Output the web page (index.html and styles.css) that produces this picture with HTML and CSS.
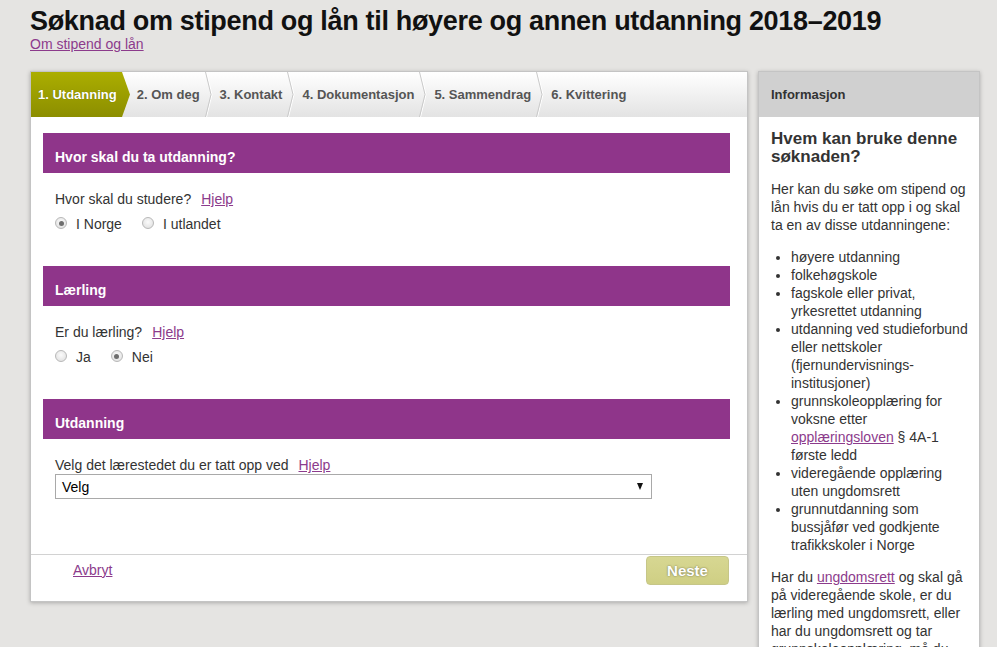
FILE: index.html
```html
<!DOCTYPE html>
<html lang="no">
<head>
<meta charset="utf-8">
<title>Søknad om stipend og lån</title>
<link rel="stylesheet" href="styles.css">
</head>
<body>
<div class="page">
  <h1 class="title">Søknad om stipend og lån til høyere og annen utdanning 2018–2019</h1>
  <a class="sublink" href="#">Om stipend og lån</a>

  <div class="layout">
    <main class="main">
      <nav class="steps">
        <div class="step active">
          <span class="step-label">1. Utdanning</span>
          <svg class="step-tip" width="8" height="45" viewBox="0 0 8 45">
            <defs>
              <linearGradient id="olive" x1="0" y1="0" x2="0" y2="1">
                <stop offset="0" stop-color="#abae00"/>
                <stop offset="1" stop-color="#8c8e00"/>
              </linearGradient>
            </defs>
            <polygon points="0,0 8,22.5 0,45" fill="url(#olive)"/>
          </svg>
        </div>
        <div class="step">
          <span class="step-label">2. Om deg</span>
          <svg class="sep" width="8" height="45" viewBox="0 0 8 45"><polyline points="1.5,0 7,22.5 1.5,45" fill="none" stroke="#fff" stroke-width="1"/><polyline points="0.5,0 6,22.5 0.5,45" fill="none" stroke="#c9c9c9" stroke-width="1"/></svg>
        </div>
        <div class="step">
          <span class="step-label">3. Kontakt</span>
          <svg class="sep" width="8" height="45" viewBox="0 0 8 45"><polyline points="1.5,0 7,22.5 1.5,45" fill="none" stroke="#fff" stroke-width="1"/><polyline points="0.5,0 6,22.5 0.5,45" fill="none" stroke="#c9c9c9" stroke-width="1"/></svg>
        </div>
        <div class="step">
          <span class="step-label">4. Dokumentasjon</span>
          <svg class="sep" width="8" height="45" viewBox="0 0 8 45"><polyline points="1.5,0 7,22.5 1.5,45" fill="none" stroke="#fff" stroke-width="1"/><polyline points="0.5,0 6,22.5 0.5,45" fill="none" stroke="#c9c9c9" stroke-width="1"/></svg>
        </div>
        <div class="step">
          <span class="step-label">5. Sammendrag</span>
          <svg class="sep" width="8" height="45" viewBox="0 0 8 45"><polyline points="1.5,0 7,22.5 1.5,45" fill="none" stroke="#fff" stroke-width="1"/><polyline points="0.5,0 6,22.5 0.5,45" fill="none" stroke="#c9c9c9" stroke-width="1"/></svg>
        </div>
        <div class="step">
          <span class="step-label">6. Kvittering</span>
        </div>
      </nav>

      <div class="form">
        <section class="section">
          <h2 class="section-head">Hvor skal du ta utdanning?</h2>
          <div class="section-body">
            <div class="question">Hvor skal du studere?<a class="help" href="#">Hjelp</a></div>
            <div class="radios">
              <span class="radio-item"><span class="radio checked"></span>I Norge</span>
              <span class="radio-item"><span class="radio"></span>I utlandet</span>
            </div>
          </div>
        </section>

        <section class="section">
          <h2 class="section-head">Lærling</h2>
          <div class="section-body">
            <div class="question">Er du lærling?<a class="help" href="#">Hjelp</a></div>
            <div class="radios">
              <span class="radio-item"><span class="radio"></span>Ja</span>
              <span class="radio-item"><span class="radio checked"></span>Nei</span>
            </div>
          </div>
        </section>

        <section class="section">
          <h2 class="section-head">Utdanning</h2>
          <div class="section-body">
            <div class="question">Velg det lærestedet du er tatt opp ved<a class="help" href="#">Hjelp</a></div>
            <div class="select"><span>Velg</span><span class="select-arrow"></span></div>
          </div>
        </section>
      </div>

      <div class="footer">
        <a class="cancel" href="#">Avbryt</a>
        <button class="next" type="button">Neste</button>
      </div>
    </main>

    <aside class="sidebar">
      <div class="side-head">Informasjon</div>
      <div class="side-body">
        <h2 class="side-title">Hvem kan bruke denne søknaden?</h2>
        <p>Her kan du søke om stipend og lån hvis du er tatt opp i og skal ta en av disse utdanningene:</p>
        <ul>
          <li>høyere utdanning</li>
          <li>folkehøgskole</li>
          <li>fagskole eller privat, yrkesrettet utdanning</li>
          <li>utdanning ved studieforbund eller nettskoler (fjernundervisnings-institusjoner)</li>
          <li>grunnskoleopplæring for voksne etter <a href="#">opplæringsloven</a> § 4A-1 første ledd</li>
          <li>videregående opplæring uten ungdomsrett</li>
          <li>grunnutdanning som bussjåfør ved godkjente trafikkskoler i Norge</li>
        </ul>
        <p>Har du <a href="#">ungdomsrett</a> og skal gå på videregående skole, er du lærling med ungdomsrett, eller har du ungdomsrett og tar grunnskoleopplæring, må du</p>
      </div>
    </aside>
  </div>
</div>
</body>
</html>
```

FILE: styles.css
```css
html, body {
  margin: 0;
  padding: 0;
}

body {
  background: #e5e4e2;
  font-family: "Liberation Sans", Arial, sans-serif;
  color: #333;
  font-size: 14px;
  overflow: hidden;
}

a {
  color: #8c3b8c;
  text-decoration: underline;
}

.page {
  width: 950px;
  margin-left: 30px;
}

.title {
  margin: 0;
  padding-top: 5px;
  font-size: 27px;
  letter-spacing: -0.32px;
  line-height: 32px;
  font-weight: bold;
  color: #111;
  white-space: nowrap;
}

.sublink {
  display: block;
  width: fit-content;
  font-size: 14px;
  line-height: 15px;
}

.layout {
  display: flex;
  align-items: flex-start;
  gap: 10px;
  margin-top: 19px;
}

.main {
  width: 716px;
  background: #fff;
  border: 1px solid #c4c4c4;
  box-shadow: 0 1px 4px rgba(0, 0, 0, 0.25);
}

/* Steps */
.steps {
  display: flex;
  height: 45px;
  background: linear-gradient(#ffffff, #e3e3e3);
}

.step {
  display: flex;
  align-items: stretch;
}

.step-label {
  display: block;
  font-size: 13px;
  font-weight: bold;
  line-height: 45px;
  color: #555;
  white-space: nowrap;
  padding-right: 5px;
}

.step .sep {
  display: block;
  margin-right: 7px;
}

.step.active .step-label {
  background: linear-gradient(#abae00, #8c8e00);
  color: #fff;
  padding: 0 5px 0 7px;
  text-shadow: 0 0 1px rgba(0, 0, 0, 0.35);
}

.step.active .step-tip {
  display: block;
  margin-right: 7px;
}

/* Form */
.form {
  padding: 16px 17px 22px 12px;
}

.section-head {
  margin: 0;
  background: #8f358a;
  color: #fff;
  font-size: 14px;
  font-weight: bold;
  line-height: 18px;
  padding: 15px 12px 7px;
}

.section-body {
  padding: 17px 12px 33px;
}

.question {
  line-height: 18px;
  color: #333;
}

.help {
  margin-left: 10px;
}

.radios {
  display: flex;
  margin-top: 7px;
  line-height: 18px;
}

.radio-item {
  display: flex;
  align-items: center;
  margin-right: 20px;
  color: #333;
}

.radio {
  display: inline-block;
  box-sizing: border-box;
  width: 12px;
  height: 12px;
  border-radius: 50%;
  border: 1px solid #b8b8b8;
  background: radial-gradient(circle at 50% 40%, #fbfbfb, #dcdcdc);
  margin-right: 9px;
  position: relative;
  top: -1px;
}

.radio.checked::after {
  content: "";
  position: absolute;
  left: 2.5px;
  top: 2.5px;
  width: 5px;
  height: 5px;
  border-radius: 50%;
  background: #6e6e6e;
}

.select {
  box-sizing: border-box;
  width: 597px;
  height: 25px;
  border: 1px solid #a9a9a9;
  background: #fff;
  display: flex;
  align-items: center;
  justify-content: space-between;
  padding: 0 8px 0 6px;
  color: #000;
  font-size: 14px;
}

.select-arrow {
  width: 0;
  height: 0;
  border-left: 3.5px solid transparent;
  border-right: 3.5px solid transparent;
  border-top: 7px solid #111;
}

/* Footer */
.footer {
  display: flex;
  justify-content: space-between;
  align-items: flex-start;
  border-top: 1px solid #d2d2d2;
  padding: 1px 18px 16px 42px;
}

.cancel {
  margin-top: 5px;
  line-height: 18px;
  font-size: 14px;
}

.next {
  box-sizing: border-box;
  width: 83px;
  height: 29px;
  border: 1px solid #c6c688;
  border-radius: 4px;
  background: linear-gradient(#d7d792, #cfcf84);
  color: #fff;
  font-family: "Liberation Sans", Arial, sans-serif;
  font-size: 15px;
  font-weight: bold;
  text-shadow: 0 0 2px rgba(0, 0, 0, 0.5);
  padding: 0;
}

/* Sidebar */
.sidebar {
  width: 220px;
  border: 1px solid #c4c4c4;
  box-shadow: 0 1px 4px rgba(0, 0, 0, 0.25);
  background: #fff;
}

.side-head {
  height: 45px;
  line-height: 45px;
  background: #d0d0d0;
  padding-left: 12px;
  font-size: 13px;
  font-weight: bold;
  color: #333;
}

.side-body {
  padding: 13px 10px 20px 12px;
  font-size: 14px;
  line-height: 18px;
  color: #333;
}

.side-title {
  margin: 0 0 14px;
  font-size: 17px;
  line-height: 18px;
  font-weight: bold;
  color: #333;
}

.side-body p {
  margin: 14px 0;
}

.side-body ul {
  margin: 14px 0;
  padding-left: 20px;
}
```
